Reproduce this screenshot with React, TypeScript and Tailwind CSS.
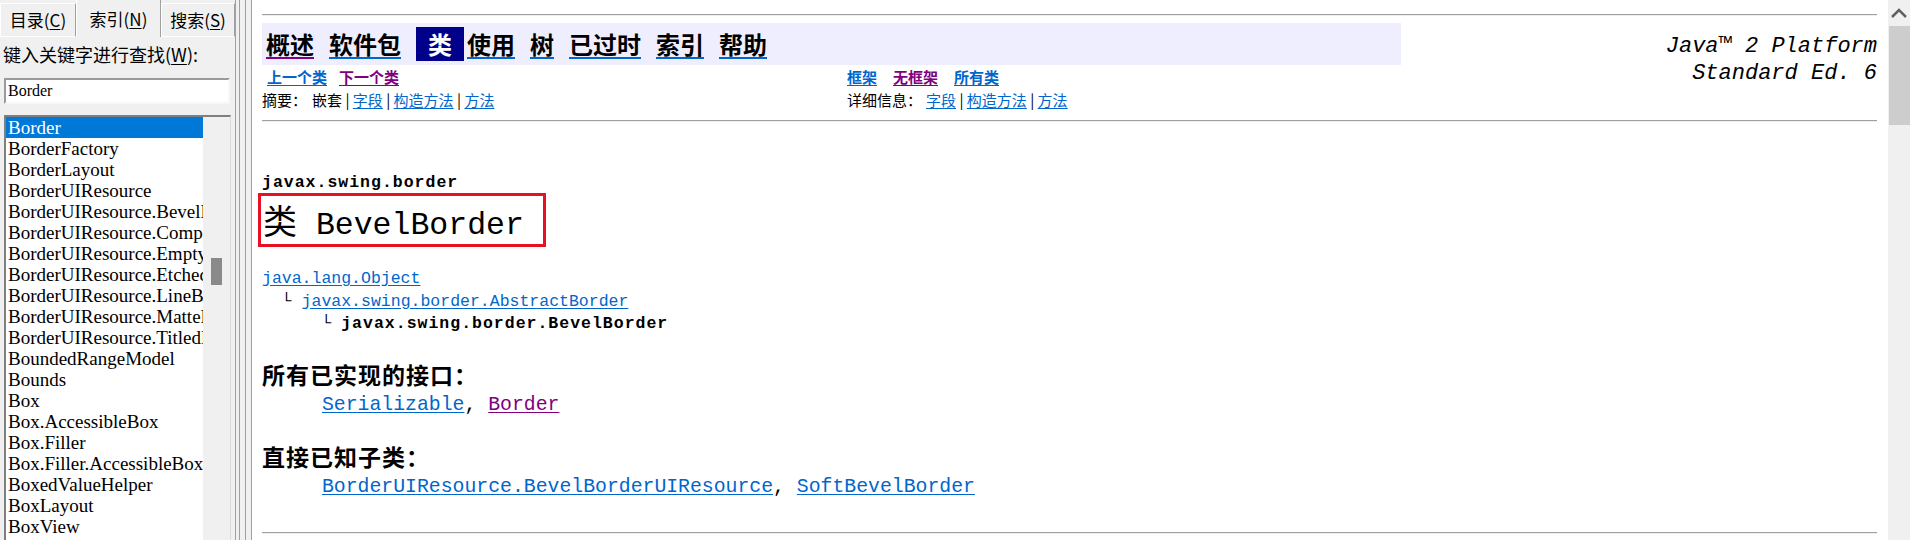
import React from "react";

const cjk = { fontFamily: '"Noto Sans CJK SC", sans-serif' };
const mono = { fontFamily: '"Liberation Mono", "DejaVu Sans Mono", "Noto Sans CJK SC", monospace' };
const serif = { fontFamily: '"Liberation Serif", serif' };

const indexItems = [
  "Border",
  "BorderFactory",
  "BorderLayout",
  "BorderUIResource",
  "BorderUIResource.BevelBorderUIResource",
  "BorderUIResource.CompoundBorderUIResource",
  "BorderUIResource.EmptyBorderUIResource",
  "BorderUIResource.EtchedBorderUIResource",
  "BorderUIResource.LineBorderUIResource",
  "BorderUIResource.MatteBorderUIResource",
  "BorderUIResource.TitledBorderUIResource",
  "BoundedRangeModel",
  "Bounds",
  "Box",
  "Box.AccessibleBox",
  "Box.Filler",
  "Box.Filler.AccessibleBox",
  "BoxedValueHelper",
  "BoxLayout",
  "BoxView",
  "BreakIterator",
];

const navItems = [
  { label: "概述", ml: "ml-[4px]", visited: true },
  { label: "软件包", ml: "ml-[15px]" },
  { label: "类", ml: "ml-[15px]", active: true },
  { label: "使用", ml: "ml-[3px]" },
  { label: "树", ml: "ml-[15px]" },
  { label: "已过时", ml: "ml-[15px]" },
  { label: "索引", ml: "ml-[15px]" },
  { label: "帮助", ml: "ml-[15px]" },
];

function Tab({ label, keyChar, active, width }: { label: string; keyChar: string; active?: boolean; width: string }) {
  return (
    <div
      className={`${width} flex items-center justify-center whitespace-nowrap border-l border-t border-r border-l-white border-t-white border-r-[#a0a0a0] text-[17px] text-black ${
        active ? "h-[38px] bg-[#f0f0f0]" : "h-[34px] border-b border-b-white bg-[#f0f0f0]"
      }`}
      style={cjk}
    >
      {label}(<span className="underline underline-offset-2">{keyChar}</span>)
    </div>
  );
}

function LeftPane() {
  return (
    <div className="flex h-[540px] w-[252px] shrink-0 bg-[#f0f0f0]">
      <div className="flex w-[235px] flex-col">
        <div className="flex h-[37px] items-end">
          <Tab label="目录" keyChar="C" width="w-[76px]" />
          <Tab label="索引" keyChar="N" width="w-[85px]" active />
          <Tab label="搜索" keyChar="S" width="w-[74px]" />
        </div>
        <div className="mt-[5px] h-[24px] pl-[3px] text-[18px] leading-[24px] text-black" style={cjk}>
          键入关键字进行查找(<span className="underline underline-offset-2">W</span>):
        </div>
        <div className="ml-[4px] mt-[12px] h-[26px] w-[226px] border-2 border-b-[#f7f7f7] border-l-[#9a9a9a] border-r-[#f7f7f7] border-t-[#9a9a9a] bg-white pl-[2px] text-[16px] leading-[22px] text-black" style={serif}>
          Border
        </div>
        <div className="ml-[4px] mt-[11px] flex min-h-0 w-[227px] flex-1 border-l-2 border-t-2 border-r border-l-[#7f7f7f] border-t-[#7f7f7f] border-r-[#dcdcdc] bg-white">
          <div className="w-[197px] overflow-hidden">
            {indexItems.map((item, i) => (
              <div
                key={item}
                className={`h-[21px] overflow-hidden whitespace-nowrap pl-[2px] text-[19px] leading-[21px] ${
                  i === 0 ? "bg-[#0078d7] text-white" : "text-black"
                }`}
                style={serif}
              >
                {item}
              </div>
            ))}
          </div>
          <div className="w-[27px] bg-[#f0f0f0] pt-[141px]">
            <div className="ml-[8px] h-[27px] w-[11px] bg-[#8a8a8a]" />
          </div>
        </div>
      </div>
      <div className="flex w-[17px]">
        <div className="w-[4px] border-l border-[#a0a0a0]" />
        <div className="w-[6px] border-l border-[#a0a0a0]" />
        <div className="w-[6px] border-l border-[#a0a0a0]" />
        <div className="w-[1px] bg-[#a0a0a0]" />
      </div>
    </div>
  );
}

function Rule() {
  return <div className="h-[2px] border-b border-t border-b-[#eeeeee] border-t-[#a0a0a0]" />;
}

function Link({ children, visited, className = "" }: { children: React.ReactNode; visited?: boolean; className?: string }) {
  return (
    <span className={`underline underline-offset-2 ${visited ? "text-[#800080]" : "text-[#0066cc]"} ${className}`}>
      {children}
    </span>
  );
}

function NavBar() {
  return (
    <div className="mt-[7px] flex">
      <div className="w-[1139px] shrink-0">
        <div className="flex h-[42px] items-center bg-[#eeeeff]" style={cjk}>
          {navItems.map((item) =>
            item.active ? (
              <div
                key={item.label}
                className={`${item.ml} flex h-[34px] items-center bg-[#00008b] px-[12px] text-[24px] font-bold leading-[30px] text-white`}
              >
                {item.label}
              </div>
            ) : (
              <span
                key={item.label}
                className={`${item.ml} text-[24px] font-bold leading-[30px] text-black underline underline-offset-[3px] ${
                  item.visited ? "decoration-[#800080]" : "decoration-[#0066cc]"
                }`}
              >
                {item.label}
              </span>
            )
          )}
        </div>
        <div className="grid h-[23px] grid-cols-[585px_1fr] text-[15px] font-bold leading-[23px]" style={cjk}>
          <div className="pl-[5px]">
            <Link>上一个类</Link>
            <Link visited className="ml-[12px]">下一个类</Link>
          </div>
          <div>
            <Link>框架</Link>
            <Link visited className="ml-[16px]">无框架</Link>
            <Link className="ml-[16px]">所有类</Link>
          </div>
        </div>
        <div className="grid h-[24px] grid-cols-[585px_1fr] text-[15px] leading-[24px] text-black" style={cjk}>
          <div>
            摘要：<span className="ml-[5px]">嵌套</span> | <Link>字段</Link> | <Link>构造方法</Link> | <Link>方法</Link>
          </div>
          <div>
            详细信息：<span className="ml-[4px]" />
            <Link>字段</Link> | <Link>构造方法</Link> | <Link>方法</Link>
          </div>
        </div>
      </div>
      <div className="flex-1 pt-[10px] text-right text-[22px] italic leading-[27px] text-black" style={mono}>
        <div>Java™ 2 Platform</div>
        <div>Standard Ed. 6</div>
      </div>
    </div>
  );
}

function Content() {
  return (
    <div className="min-w-0 flex-1 pl-[10px] pr-[11px]">
      <div className="pt-[14px]">
        <Rule />
      </div>
      <NavBar />
      <div className="mt-[8px]">
        <Rule />
      </div>
      <div className="mt-[51px] h-[20px] text-[16.5px] font-bold leading-[20px] tracking-[1px] text-black" style={mono}>
        javax.swing.border
      </div>
      <div className="-ml-[4px] h-[54px] w-[288px] border-[3px] border-[#e81123] pl-[2px] leading-[48px] text-black">
        <span className="text-[34px]" style={cjk}>类</span>
        <span className="text-[31.5px]" style={mono}> BevelBorder</span>
      </div>
      <div className="mt-[21px] whitespace-pre text-[16.5px] leading-[22.5px] text-black" style={mono}>
        <div><Link>java.lang.Object</Link></div>
        <div>{"  └ "}<Link>javax.swing.border.AbstractBorder</Link></div>
        <div>{"      └ "}<span className="font-bold tracking-[1px]">javax.swing.border.BevelBorder</span></div>
      </div>
      <div className="mt-[24px] h-[28px] text-[23px] font-bold leading-[28px] tracking-[1px] text-black" style={cjk}>
        所有已实现的接口：
      </div>
      <div className="mt-[3px] h-[28px] pl-[60px] text-[19.8px] leading-[28px] text-black" style={mono}>
        <Link>Serializable</Link>, <Link visited>Border</Link>
      </div>
      <div className="mt-[23px] h-[28px] text-[23px] font-bold leading-[28px] tracking-[1px] text-black" style={cjk}>
        直接已知子类：
      </div>
      <div className="mt-[3px] h-[28px] pl-[60px] text-[19.8px] leading-[28px] text-black" style={mono}>
        <Link>BorderUIResource.BevelBorderUIResource</Link>, <Link>SoftBevelBorder</Link>
      </div>
      <div className="mt-[31px]">
        <Rule />
      </div>
    </div>
  );
}

function PageScrollbar() {
  return (
    <div className="flex h-[540px] w-[22px] shrink-0 flex-col bg-[#f0f0f0]">
      <div className="flex h-[26px] items-center justify-center">
        <svg width="18" height="12" viewBox="0 0 18 12">
          <path d="M2 10 L9 3 L16 10" fill="none" stroke="#606060" strokeWidth="2.5" />
        </svg>
      </div>
      <div className="ml-[1px] h-[99px] bg-[#cdcdcd]" />
    </div>
  );
}

export default function App() {
  return (
    <div className="flex h-[540px] w-[1910px] overflow-hidden bg-white">
      <LeftPane />
      <Content />
      <PageScrollbar />
    </div>
  );
}
